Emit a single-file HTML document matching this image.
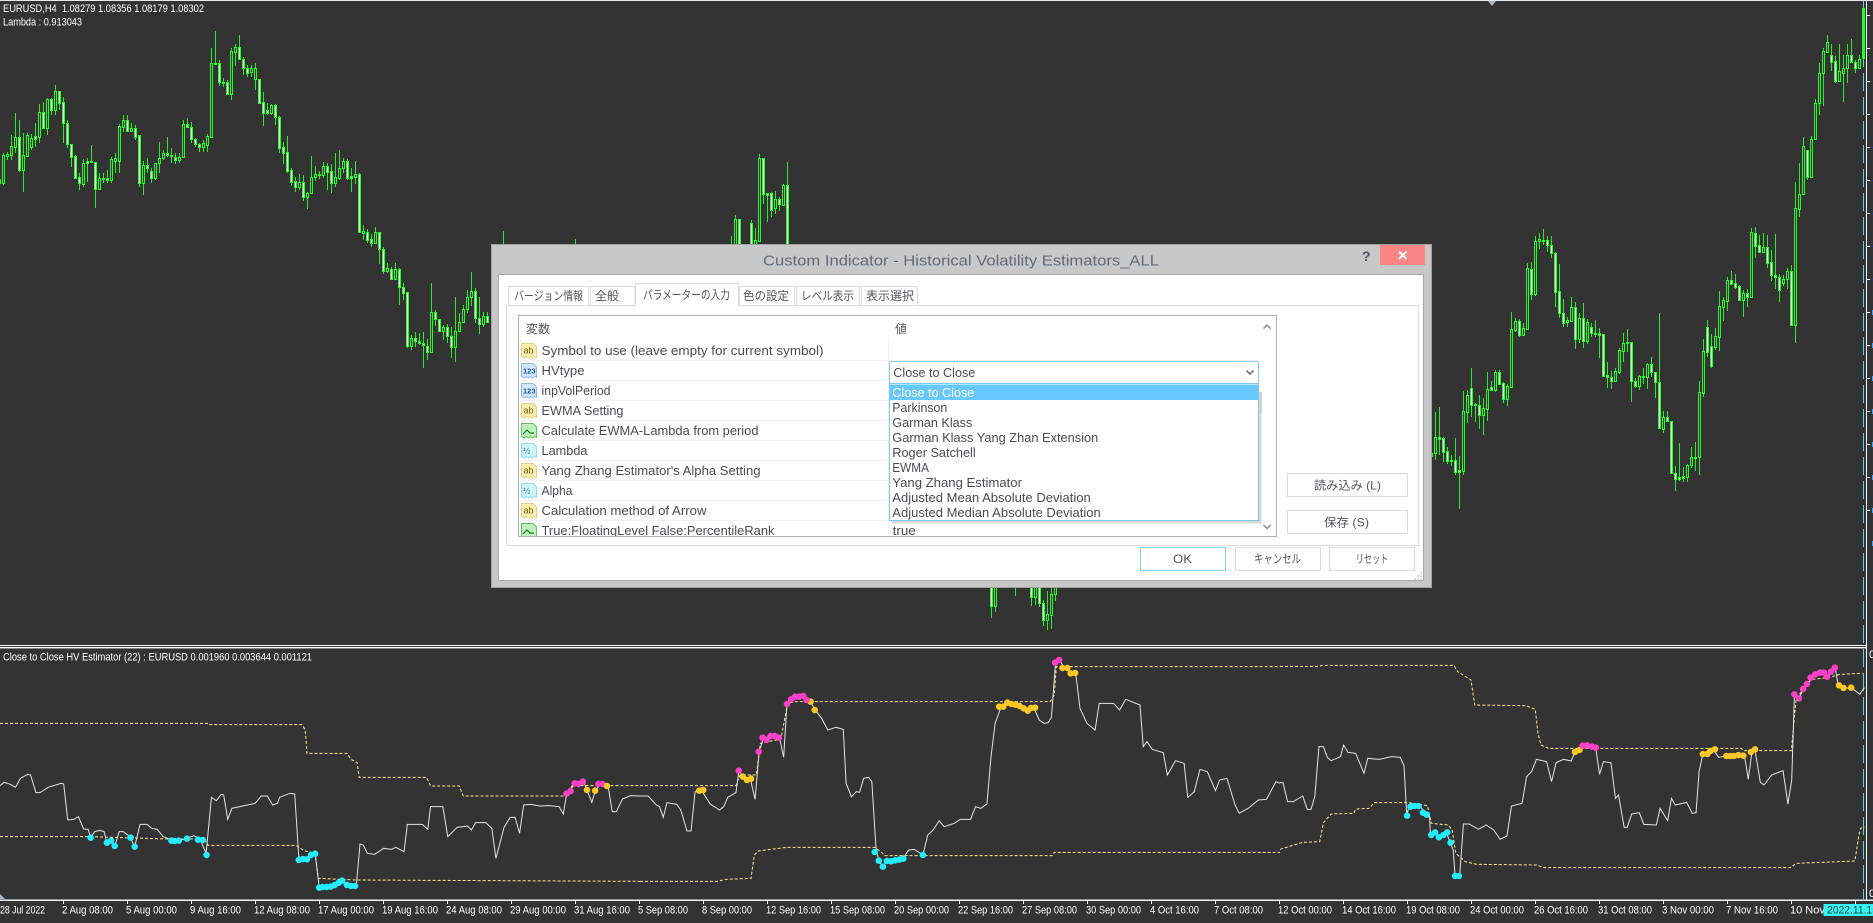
<!DOCTYPE html>
<html lang="ja"><head><meta charset="utf-8"><title>EURUSD,H4</title>
<style>
html,body{margin:0;padding:0;background:#333;width:1873px;height:923px;overflow:hidden}
svg{display:block;position:absolute;left:0;top:0}
text{font-family:"Liberation Sans","Noto Sans CJK JP",sans-serif;white-space:pre}
.m{font-size:11px;fill:#fff}
.d{font-size:13px;fill:#4b4b52}
.j{font-size:12px;fill:#55555a}
.ns{vector-effect:non-scaling-stroke}
</style></head><body>
<svg id="s" width="1873" height="923" viewBox="0 0 1873 923" xmlns="http://www.w3.org/2000/svg">
<rect width="1873" height="923" fill="#333"/>
<rect x="0" y="0" width="1873" height="1" fill="#e8e8e8"/>
<path d="M1488 1h8l-4 5z" fill="#a8b8c8"/>
<path d="M0 894l5 5H0z" fill="#a8b8c8"/>

<path d="M1863.5 1V19M1863.5 25V43M1863.5 49V67M1863.5 73V91M1863.5 97V115M1863.5 121V139M1863.5 145V163M1863.5 169V187M1863.5 193V211M1863.5 217V235M1863.5 241V259M1863.5 265V283M1863.5 289V307M1863.5 313V331M1863.5 337V355M1863.5 361V379M1863.5 385V403M1863.5 409V427M1863.5 433V451M1863.5 457V475M1863.5 481V499M1863.5 505V523M1863.5 529V547M1863.5 553V571M1863.5 577V595M1863.5 601V619M1863.5 625V643M1863.5 649V667M1863.5 673V691M1863.5 697V715M1863.5 721V739M1863.5 745V763M1863.5 769V787M1863.5 793V811M1863.5 817V835M1863.5 841V859M1863.5 865V883M1863.5 889V899" stroke="#4fdcea" stroke-width="1" fill="none"/>
<rect x="1866" y="0" width="1" height="900" fill="#fff"/>
<path d="M1867 15.5h3M1867 48.5h3M1867 81.5h3M1867 114.5h3M1867 147.5h3M1867 180.5h3M1867 213.5h3M1867 246.5h3M1867 279.5h3M1867 312.5h3M1867 345.5h3M1867 378.5h3M1867 411.5h3M1867 444.5h3M1867 477.5h3M1867 510.5h3" stroke="#fff" fill="none"/>
<path d="M1872 312.5h1M1872 345.5h1M1872 378.5h1M1872 411.5h1M1872 444.5h1M1872 477.5h1M1872 510.5h1M1872 543.5h1" stroke="#3fa0ff" stroke-width="5" fill="none"/>
<path d="M1872 246.5h1M1872 279.5h1M1872 213.5h1M1872 180.5h1M1872 147.5h1" stroke="#2a2a90" stroke-width="2" fill="none"/>

<g id="c" shape-rendering="crispEdges"></g>

<text class="m" x="3" y="12" textLength="201" lengthAdjust="spacingAndGlyphs">EURUSD,H4  1.08279 1.08356 1.08179 1.08302</text>
<text class="m" x="3" y="25.5" textLength="79" lengthAdjust="spacingAndGlyphs">Lambda : 0.913043</text>

<rect x="0" y="645" width="1866" height="1" fill="#fff"/>
<rect x="0" y="647" width="1866" height="1.4" fill="#fff"/>
<text class="m" x="3" y="660.5" textLength="309" lengthAdjust="spacingAndGlyphs">Close to Close HV Estimator (22) : EURUSD 0.001960 0.003644 0.001121</text>
<text class="m" x="1869" y="658">0</text>
<text class="m" x="1869" y="897">0</text>

<g fill="none">
<g transform="translate(0,640) scale(.40816,.33333)">
<polyline class="ns" stroke="#ffee88" stroke-width="1" stroke-dasharray="3 2" points="0,250 510,250 512,254 740,254 748,270 752,340 850,340 860,358 875,368 880,412 1045,412 1055,438 1125,438 1135,468 1385,468 1405,437 1568,437"/>
<polyline class="ns" stroke="#ffee88" stroke-width="1" stroke-dasharray="3 2" points="0,590 220,590 410,597 500,597 510,616 725,616 745,632 772,640 780,715 870,720 1568,724"/>
<polyline class="ns" stroke="#e4e4e4" stroke-width="1" points="0,437 10,427 25,433 38,442 50,415 68,403 75,405 88,458 98,458 118,442 150,430 156,432 166,540 180,538 192,530 205,567 216,568 222,592 232,575 245,571 255,575 262,610 270,600 282,615 292,575 302,575 318,590 330,620 343,553 360,553 372,565 385,568 400,590 415,597 440,600 455,597 475,587 490,597 505,640 518,472 530,482 542,463 548,465 558,538 568,505 625,490 640,468 655,468 668,495 680,490 685,472 710,460 722,462 732,650 745,657 760,645 772,640 782,740 800,740 835,722 850,735 873,735 882,612 890,615 900,640 918,643 940,625 960,628 970,622 990,635 998,553 1035,553 1048,568 1055,500 1085,500 1097,590 1120,562 1145,558 1155,570 1165,548 1190,548 1205,565 1215,655 1235,562 1250,532 1262,532 1273,580 1283,495 1300,493 1322,498 1345,497 1370,500 1380,522 1388,465 1405,430 1430,425 1438,450 1450,487 1458,455 1470,432 1490,440 1500,515 1510,515 1525,477 1545,467 1568,468"/>
<path class="ns" stroke="#22eeff" stroke-width="6.500" stroke-linecap="round" d="M222 593h.1M262 608h.1M272 602h.1M281 618h.1M320 593h.1M330 620h.1M420 602h.1M428 603h.1M438 602h.1M458 596h.1M485 599h.1M497 600h.1M506 645h.1M732 660h.1M742 657h.1M752 658h.1M762 645h.1M772 641h.1M782 743h.1M790 741h.1M800 741h.1M810 740h.1M820 735h.1M830 728h.1M838 722h.1M850 735h.1M860 738h.1M870 738h.1"/>
<path class="ns" stroke="#ff40c8" stroke-width="6.500" stroke-linecap="round" d="M1388 461h.1M1398 453h.1M1408 430h.1M1418 432h.1M1428 425h.1M1466 432h.1M1476 432h.1"/>
<path class="ns" stroke="#ffc822" stroke-width="6.500" stroke-linecap="round" d="M1438 450h.1M1458 452h.1M1487 438h.1"/>
</g>
<g transform="translate(640,640) scale(.40816,.33333)">
<polyline class="ns" stroke="#ffee88" stroke-width="1" stroke-dasharray="3 2" points="0,437 235,437 245,405 285,405 295,310 345,297 362,190 380,185 1005,185 1015,165 1020,80 1568,80"/>
<polyline class="ns" stroke="#ffee88" stroke-width="1" stroke-dasharray="3 2" points="0,724 190,724 210,718 272,715 280,645 290,633 360,622 575,622 590,635 600,647 1010,647 1015,637 1568,637"/>
<polyline class="ns" stroke="#e4e4e4" stroke-width="1" points="0,468 20,468 40,495 48,500 57,532 66,488 90,493 100,510 115,573 125,573 135,455 150,450 172,492 195,510 205,500 215,472 235,458 242,395 255,410 270,415 282,478 292,335 302,295 325,287 342,295 352,352 360,190 380,172 400,168 418,185 428,208 445,235 460,270 480,262 498,268 505,430 518,470 530,455 538,457 548,415 560,412 568,425 578,620 585,662 595,680 605,663 645,655 658,630 672,628 693,645 705,585 718,570 733,542 745,560 770,550 785,538 810,538 822,500 835,505 850,492 860,350 870,250 885,200 900,188 935,200 950,212 965,203 978,240 990,250 1000,248 1008,232 1018,70 1028,60 1040,85 1060,100 1068,105 1078,205 1095,250 1115,270 1125,190 1160,190 1175,210 1190,178 1225,195 1233,320 1242,305 1255,328 1282,338 1292,405 1312,362 1333,370 1342,472 1358,455 1372,388 1390,395 1410,452 1420,420 1438,415 1458,495 1468,520 1490,505 1515,480 1535,478 1558,425 1568,430"/>
<path class="ns" stroke="#ffc822" stroke-width="6.500" stroke-linecap="round" d="M145 452h.1M155 450h.1M252 410h.1M262 420h.1M272 416h.1M418 185h.1M428 210h.1M880 200h.1M890 200h.1M900 188h.1M910 192h.1M920 194h.1M930 198h.1M940 205h.1M950 212h.1M958 204h.1M968 203h.1M1035 84h.1M1047 84h.1M1055 100h.1M1066 99h.1"/>
<path class="ns" stroke="#ff40c8" stroke-width="6.500" stroke-linecap="round" d="M242 392h.1M291 335h.1M300 293h.1M310 300h.1M320 288h.1M330 288h.1M340 293h.1M360 192h.1M370 178h.1M380 170h.1M390 170h.1M400 168h.1M408 180h.1M1017 68h.1M1027 60h.1"/>
<path class="ns" stroke="#22eeff" stroke-width="6.500" stroke-linecap="round" d="M575 636h.1M585 662h.1M595 680h.1M605 663h.1M615 664h.1M625 661h.1M635 659h.1M645 656h.1M693 645h.1"/>
</g>
<g transform="translate(1280,640) scale(.37821,.33333)">
<polyline class="ns" stroke="#ffee88" stroke-width="1" stroke-dasharray="3 2" points="0,79 105,79 110,76 460,76 470,95 505,120 515,195 650,197 675,208 682,280 690,315 710,325 1220,325 1225,332 1352,332 1360,230 1365,175 1405,118 1450,113 1480,103 1540,100"/>
<polyline class="ns" stroke="#ffee88" stroke-width="1" stroke-dasharray="3 2" points="0,628 60,607 105,605 115,548 135,522 195,520 200,507 235,505 250,488 340,488 390,497 400,550 445,555 455,570 465,640 490,665 520,673 680,675 695,683 1350,683 1365,670 1520,663 1530,590 1535,565 1545,562"/>
<polyline class="ns" stroke="#e4e4e4" stroke-width="1" points="0,428 8,428 20,485 35,485 60,468 72,508 82,508 92,470 103,320 115,320 125,352 135,362 160,350 168,315 180,337 200,340 222,400 232,355 262,358 295,350 318,352 328,378 335,525 342,497 370,497 385,522 395,525 398,585 410,575 420,592 440,578 450,608 458,630 463,708 475,708 485,552 500,552 525,568 545,555 565,570 582,598 600,588 612,498 640,490 652,410 665,395 678,358 705,365 718,425 730,368 750,358 770,363 780,335 795,322 835,325 845,403 855,365 875,368 887,475 895,465 910,562 918,562 930,522 950,518 962,553 995,555 1005,505 1025,542 1035,475 1045,495 1075,487 1090,520 1100,518 1108,395 1118,342 1145,328 1160,352 1180,348 1228,345 1238,418 1248,335 1256,330 1270,427 1280,435 1300,405 1330,392 1343,492 1353,420 1360,170 1372,175 1385,145 1405,115 1430,98 1448,110 1468,83 1475,130 1490,145 1510,143 1533,163 1545,143"/>
<path class="ns" stroke="#22eeff" stroke-width="6.500" stroke-linecap="round" d="M336 527h.1M345 500h.1M355 498h.1M366 498h.1M378 518h.1M388 524h.1M400 585h.1M410 577h.1M420 592h.1M432 585h.1M442 577h.1M451 608h.1M463 708h.1M473 708h.1"/>
<path class="ns" stroke="#ffc822" stroke-width="6.500" stroke-linecap="round" d="M780 336h.1M792 330h.1M1118 342h.1M1130 342h.1M1138 333h.1M1150 328h.1M1180 348h.1M1190 348h.1M1200 348h.1M1212 345h.1M1225 347h.1M1245 336h.1M1256 328h.1M1478 136h.1M1490 144h.1M1510 143h.1"/>
<path class="ns" stroke="#ff40c8" stroke-width="6.500" stroke-linecap="round" d="M800 317h.1M812 316h.1M825 320h.1M835 323h.1M1360 163h.1M1372 175h.1M1383 147h.1M1393 132h.1M1403 113h.1M1415 103h.1M1428 98h.1M1438 98h.1M1446 110h.1M1457 95h.1M1467 83h.1"/>
</g>
</g>

<rect x="0" y="899.500" width="1873" height="1.400" fill="#fff"/>
<path d="M63.5 900v4M127.5 900v4M191.5 900v4M255.5 900v4M319.5 900v4M383.5 900v4M447.5 900v4M511.5 900v4M575.5 900v4M639.5 900v4M703.5 900v4M767.5 900v4M831.5 900v4M895.5 900v4M959.5 900v4M1023.5 900v4M1087.5 900v4M1151.5 900v4M1215.5 900v4M1279.5 900v4M1343.5 900v4M1407.5 900v4M1471.5 900v4M1535.5 900v4M1599.5 900v4M1663.5 900v4M1727.5 900v4M1791.5 900v4M1855.5 900v4" stroke="#fff" fill="none"/>
<g class="ax">
<text class="m" x="0" y="913.500" textLength="45" lengthAdjust="spacingAndGlyphs">28 Jul 2022</text>
<text class="m" x="62" y="913.500" textLength="51" lengthAdjust="spacingAndGlyphs">2 Aug 08:00</text>
<text class="m" x="126" y="913.500" textLength="51" lengthAdjust="spacingAndGlyphs">5 Aug 00:00</text>
<text class="m" x="190" y="913.500" textLength="51" lengthAdjust="spacingAndGlyphs">9 Aug 16:00</text>
<text class="m" x="254" y="913.500" textLength="56" lengthAdjust="spacingAndGlyphs">12 Aug 08:00</text>
<text class="m" x="318" y="913.500" textLength="56" lengthAdjust="spacingAndGlyphs">17 Aug 00:00</text>
<text class="m" x="382" y="913.500" textLength="56" lengthAdjust="spacingAndGlyphs">19 Aug 16:00</text>
<text class="m" x="446" y="913.500" textLength="56" lengthAdjust="spacingAndGlyphs">24 Aug 08:00</text>
<text class="m" x="510" y="913.500" textLength="56" lengthAdjust="spacingAndGlyphs">29 Aug 00:00</text>
<text class="m" x="574" y="913.500" textLength="56" lengthAdjust="spacingAndGlyphs">31 Aug 16:00</text>
<text class="m" x="638" y="913.500" textLength="50" lengthAdjust="spacingAndGlyphs">5 Sep 08:00</text>
<text class="m" x="702" y="913.500" textLength="50" lengthAdjust="spacingAndGlyphs">8 Sep 00:00</text>
<text class="m" x="766" y="913.500" textLength="55" lengthAdjust="spacingAndGlyphs">12 Sep 16:00</text>
<text class="m" x="830" y="913.500" textLength="55" lengthAdjust="spacingAndGlyphs">15 Sep 08:00</text>
<text class="m" x="894" y="913.500" textLength="55" lengthAdjust="spacingAndGlyphs">20 Sep 00:00</text>
<text class="m" x="958" y="913.500" textLength="55" lengthAdjust="spacingAndGlyphs">22 Sep 16:00</text>
<text class="m" x="1022" y="913.500" textLength="55" lengthAdjust="spacingAndGlyphs">27 Sep 08:00</text>
<text class="m" x="1086" y="913.500" textLength="55" lengthAdjust="spacingAndGlyphs">30 Sep 00:00</text>
<text class="m" x="1150" y="913.500" textLength="49" lengthAdjust="spacingAndGlyphs">4 Oct 16:00</text>
<text class="m" x="1214" y="913.500" textLength="49" lengthAdjust="spacingAndGlyphs">7 Oct 08:00</text>
<text class="m" x="1278" y="913.500" textLength="54" lengthAdjust="spacingAndGlyphs">12 Oct 00:00</text>
<text class="m" x="1342" y="913.500" textLength="54" lengthAdjust="spacingAndGlyphs">14 Oct 16:00</text>
<text class="m" x="1406" y="913.500" textLength="54" lengthAdjust="spacingAndGlyphs">19 Oct 08:00</text>
<text class="m" x="1470" y="913.500" textLength="54" lengthAdjust="spacingAndGlyphs">24 Oct 00:00</text>
<text class="m" x="1534" y="913.500" textLength="54" lengthAdjust="spacingAndGlyphs">26 Oct 16:00</text>
<text class="m" x="1598" y="913.500" textLength="54" lengthAdjust="spacingAndGlyphs">31 Oct 08:00</text>
<text class="m" x="1662" y="913.500" textLength="52" lengthAdjust="spacingAndGlyphs">3 Nov 00:00</text>
<text class="m" x="1726" y="913.500" textLength="52" lengthAdjust="spacingAndGlyphs">7 Nov 16:00</text>
<text class="m" x="1790" y="913.500">10 Nov</text>
</g>
<rect x="1823.5" y="904" width="50" height="12" fill="#33f5f5"/>
<text x="1827" y="913.500" style="font-size:11px;fill:#1c3c40" textLength="51" lengthAdjust="spacingAndGlyphs">2022.11.15</text>

<!-- dialog -->
<rect x="491.5" y="244.5" width="940" height="343" fill="#c8c8c8" stroke="#a2a2a2"/>
<rect x="498.5" y="274.5" width="925" height="306" fill="#fff" stroke="#a8a8a8"/>
<text x="763" y="265.5" style="font-size:15px;fill:#5f6b78" textLength="396" lengthAdjust="spacingAndGlyphs">Custom Indicator - Historical Volatility Estimators_ALL</text>
<text x="1362" y="261" style="font-size:14px;font-weight:bold;fill:#4a5460">?</text>
<rect x="1380" y="245" width="45" height="20" fill="#fb8585"/>
<path d="M1399 251.5l7.5 7.5M1406.500 251.500l-7.500 7.500" stroke="#fff" stroke-width="2" fill="none"/>

<rect x="506.500" y="305.500" width="912" height="240" fill="#fff" stroke="#dcdcdc"/>
<g fill="#fff" stroke="#dcdcdc">
<path d="M508.500 305V286.500H588.500V305"/>
<path d="M590.500 305V286.500H635V305"/>
<path d="M739.500 305V286.500H794.500V305"/>
<path d="M796.500 305V286.500H859.500V305"/>
<path d="M861.500 305V286.500H917.500V305"/>
<path d="M635.500 306V283.500H738.500V306" />
</g>
<rect x="636" y="303" width="102" height="4" fill="#fff"/>
<text class="j" x="514" y="300" textLength="69" lengthAdjust="spacingAndGlyphs">バージョン情報</text>
<text class="j" x="595" y="300" textLength="24" lengthAdjust="spacingAndGlyphs">全般</text>
<text class="j" x="643" y="299" textLength="87" lengthAdjust="spacingAndGlyphs">パラメーターの入力</text>
<text class="j" x="743" y="300" textLength="46" lengthAdjust="spacingAndGlyphs">色の設定</text>
<text class="j" x="801" y="300" textLength="53" lengthAdjust="spacingAndGlyphs">レベル表示</text>
<text class="j" x="866" y="300" textLength="48" lengthAdjust="spacingAndGlyphs">表示選択</text>

<clipPath id="lb"><rect x="519" y="316" width="758" height="220"/></clipPath>
<rect x="518.500" y="315.500" width="758" height="221" fill="#fff" stroke="#aab0ba"/>
<text class="j" x="526" y="333" textLength="24" lengthAdjust="spacingAndGlyphs">変数</text>
<text class="j" x="895" y="333" textLength="12" lengthAdjust="spacingAndGlyphs">値</text>
<path d="M1263.500 328.500l3.500-3.500 3.500 3.500M1263.500 525l3.500 3.500 3.500-3.500" stroke="#8c8c8c" stroke-width="1.500" fill="none"/>

<g clip-path="url(#lb)">
<path d="M522 360.500H1257M522 380.500H888M522 400.500H1257M522 420.500H1257M522 440.500H1257M522 460.500H1257M522 480.500H1257M522 500.500H1257M522 520.500H1257M888.500 341V536" stroke="#f1f1f1" fill="none"/>

<g transform="translate(521,343)"><path d="M.5 .5H12L15.500 4V14.500L13.500 13.500L11.500 15 9.500 13.500 7.500 15 5.500 13.500 3.500 15 .5 13.500Z" fill="#fbeea8" stroke="#e4d080"/><text x="2.500" y="10.500" style="font-size:9px;fill:#6a5a20">ab</text></g>
<g transform="translate(521,363)"><path d="M.5 .5H12L15.500 4V14.500L13.500 13.500L11.500 15 9.500 13.500 7.500 15 5.500 13.500 3.500 15 .5 13.500Z" fill="#cfe6fb" stroke="#8cbce6"/><text x="2" y="10.500" style="font-size:7.500px;font-weight:bold;fill:#1f5a90">123</text></g>
<g transform="translate(521,383)"><path d="M.5 .5H12L15.500 4V14.500L13.500 13.500L11.500 15 9.500 13.500 7.500 15 5.500 13.500 3.500 15 .5 13.500Z" fill="#cfe6fb" stroke="#8cbce6"/><text x="2" y="10.500" style="font-size:7.500px;font-weight:bold;fill:#1f5a90">123</text></g>
<g transform="translate(521,403)"><path d="M.5 .5H12L15.500 4V14.500L13.500 13.500L11.500 15 9.500 13.500 7.500 15 5.500 13.500 3.500 15 .5 13.500Z" fill="#fbeea8" stroke="#e4d080"/><text x="2.500" y="10.500" style="font-size:9px;fill:#6a5a20">ab</text></g>
<g transform="translate(521,423)"><path d="M.5 .5H12L15.500 4V14.500L13.500 13.500L11.500 15 9.500 13.500 7.500 15 5.500 13.500 3.500 15 .5 13.500Z" fill="#bff0bf" stroke="#5cc45c"/><path d="M2 11l4-4 3 3h4" fill="none" stroke="#187a18" stroke-width="1.200"/></g>
<g transform="translate(521,443)"><path d="M.5 .5H12L15.500 4V14.500L13.500 13.500L11.500 15 9.500 13.500 7.500 15 5.500 13.500 3.500 15 .5 13.500Z" fill="#cdf5fa" stroke="#8fdeea"/><text x="2.500" y="10.500" style="font-size:8px;fill:#2a7a8a">½</text></g>
<g transform="translate(521,463)"><path d="M.5 .5H12L15.500 4V14.500L13.500 13.500L11.500 15 9.500 13.500 7.500 15 5.500 13.500 3.500 15 .5 13.500Z" fill="#fbeea8" stroke="#e4d080"/><text x="2.500" y="10.500" style="font-size:9px;fill:#6a5a20">ab</text></g>
<g transform="translate(521,483)"><path d="M.5 .5H12L15.500 4V14.500L13.500 13.500L11.500 15 9.500 13.500 7.500 15 5.500 13.500 3.500 15 .5 13.500Z" fill="#cdf5fa" stroke="#8fdeea"/><text x="2.500" y="10.500" style="font-size:8px;fill:#2a7a8a">½</text></g>
<g transform="translate(521,503)"><path d="M.5 .5H12L15.500 4V14.500L13.500 13.500L11.500 15 9.500 13.500 7.500 15 5.500 13.500 3.500 15 .5 13.500Z" fill="#fbeea8" stroke="#e4d080"/><text x="2.500" y="10.500" style="font-size:9px;fill:#6a5a20">ab</text></g>
<g transform="translate(521,523)"><path d="M.5 .5H12L15.500 4V14.500L13.500 13.500L11.500 15 9.500 13.500 7.500 15 5.500 13.500 3.500 15 .5 13.500Z" fill="#bff0bf" stroke="#5cc45c"/><path d="M2 11l4-4 3 3h4" fill="none" stroke="#187a18" stroke-width="1.200"/></g>

<text class="d" x="541.500" y="355" textLength="282" lengthAdjust="spacingAndGlyphs">Symbol to use (leave empty for current symbol)</text>
<text class="d" x="541.500" y="375" textLength="43" lengthAdjust="spacingAndGlyphs">HVtype</text>
<text class="d" x="541.500" y="395" textLength="69" lengthAdjust="spacingAndGlyphs">inpVolPeriod</text>
<text class="d" x="541.500" y="415" textLength="82" lengthAdjust="spacingAndGlyphs">EWMA Setting</text>
<text class="d" x="541.500" y="435" textLength="217" lengthAdjust="spacingAndGlyphs">Calculate EWMA-Lambda from period</text>
<text class="d" x="541.500" y="455" textLength="46" lengthAdjust="spacingAndGlyphs">Lambda</text>
<text class="d" x="541.500" y="475" textLength="219" lengthAdjust="spacingAndGlyphs">Yang Zhang Estimator's Alpha Setting</text>
<text class="d" x="541.500" y="495" textLength="31" lengthAdjust="spacingAndGlyphs">Alpha</text>
<text class="d" x="541.500" y="515" textLength="165" lengthAdjust="spacingAndGlyphs">Calculation method of Arrow</text>
<text class="d" x="541.500" y="535" textLength="233" lengthAdjust="spacingAndGlyphs">True:FloatingLevel False:PercentileRank</text>
<text class="d" x="892.700" y="535" textLength="23" lengthAdjust="spacingAndGlyphs">true</text>
</g>

<!-- dropdown -->
<rect x="1259" y="392" width="3" height="21" fill="#d2d2d2"/>
<rect x="1259" y="413" width="2.500" height="110" fill="#c9c9c9" opacity=".7"/>
<rect x="892" y="521" width="369" height="2.500" fill="#c9c9c9" opacity=".7"/>
<rect x="889.500" y="361.500" width="369" height="22" fill="#fff" stroke="#84cdf8"/>
<text class="d" x="893.300" y="377" textLength="82" lengthAdjust="spacingAndGlyphs">Close to Close</text>
<path d="M1246.500 370.500l3.500 3.500 3.500-3.500" stroke="#7c7c7c" stroke-width="1.800" fill="none"/>
<rect x="889.500" y="383.500" width="369" height="137" fill="#fff" stroke="#7ec8f5"/>
<rect x="890" y="384.500" width="368" height="15.500" fill="#66c8ff"/>
<text class="d" x="892.300" y="397" style="fill:#fff" textLength="82" lengthAdjust="spacingAndGlyphs">Close to Close</text>
<text class="d" x="892.300" y="412" textLength="55" lengthAdjust="spacingAndGlyphs">Parkinson</text>
<text class="d" x="892.300" y="427" textLength="80" lengthAdjust="spacingAndGlyphs">Garman Klass</text>
<text class="d" x="892.300" y="442" textLength="206" lengthAdjust="spacingAndGlyphs">Garman Klass Yang Zhan Extension</text>
<text class="d" x="892.300" y="457" textLength="83.400" lengthAdjust="spacingAndGlyphs">Roger Satchell</text>
<text class="d" x="892.300" y="472" textLength="36.700" lengthAdjust="spacingAndGlyphs">EWMA</text>
<text class="d" x="892.300" y="487" textLength="129.700" lengthAdjust="spacingAndGlyphs">Yang Zhang Estimator</text>
<text class="d" x="892.300" y="502" textLength="198.400" lengthAdjust="spacingAndGlyphs">Adjusted Mean Absolute Deviation</text>
<text class="d" x="892.300" y="517" textLength="208.400" lengthAdjust="spacingAndGlyphs">Adjusted Median Absolute Deviation</text>

<!-- buttons -->
<g fill="#fff" stroke="#dcdcdc">
<rect x="1287.500" y="473.500" width="120" height="23"/>
<rect x="1287.500" y="510.500" width="120" height="23"/>
<rect x="1235.500" y="547.500" width="85" height="23"/>
<rect x="1329.500" y="547.500" width="85" height="23"/>
</g>
<rect x="1140.500" y="547.500" width="85" height="23" fill="#fff" stroke="#7fd0fa"/>
<text class="j" x="1314" y="489.500" textLength="67" lengthAdjust="spacingAndGlyphs">読み込み (L)</text>
<text class="j" x="1324" y="526.500" textLength="45" lengthAdjust="spacingAndGlyphs">保存 (S)</text>
<text class="j" x="1173" y="563" textLength="19" lengthAdjust="spacingAndGlyphs">OK</text>
<text class="j" x="1254" y="563" textLength="47" lengthAdjust="spacingAndGlyphs">キャンセル</text>
<text class="j" x="1355.700" y="563" textLength="32.600" lengthAdjust="spacingAndGlyphs">リセット</text>
<path d="M1420 572h2v2h-2zM1417 575h2v2h-2zM1420 575h2v2h-2zM1414 578h2v2h-2zM1417 578h2v2h-2zM1420 578h2v2h-2z" fill="#dcdcdc"/>
</svg>
<script>
(function(){
var S=[
[-1,0,[525,555,537,550,0]],
[0,0,[460,555,465,550,0, 455,480,462,467,0, 405,480,438,465,0, 340,460,412,440,0, 360,515,412,510,1, 400,575,465,510,0, 400,470,405,467,0, 403,450,414,440,0, 370,440,408,416,1, 312,430,337,410,0, 305,385,337,383,1, 295,405,297,383,0, 295,345,297,330,1, 255,345,273,330,0, 272,330,273,308,1, 292,430,307,370,1, 360,445,370,433,1, 433,500,433,470,1, 465,535,468,533,1, 520,570,532,550,1, 478,560,490,552,0, 475,545,484,490,1, 435,490,484,487,1, 485,625,487,566,1, 520,570,535,566,0, 520,550,534,537,1, 510,550,535,540,1, 470,550,477,540,0, 460,520,475,484,0, 372,518,378,484,0, 345,395,361,380,0, 345,392,361,392,1, 370,395,385,392,0, 375,420,385,410,1, 405,560,405,550,1, 482,585,496,550,0, 475,520,496,505,1, 505,550,514,533,1, 490,540,490,533,0, 425,520,475,490,0, 450,480,459,475,0, 410,470,460,465,1, 445,490,465,468,1, 460,492,472,480,1, 460,490,472,480,0, 360,472,373,472,0, 355,380,373,380,1, 365,430,380,418,1, 415,440,418,433,1, 428,455,432,442,1, 420,455,430,442,0, 403,455,408,434,0, 145,415,190,412,0, 93,190,188,190,1, 180,258,190,245,1, 235,260,245,248,1, 240,285,247,282,1, 145,300,153,282,0, 133,197,142,155,0, 105,180,142,178,1, 170,225,178,203,1, 195,232,203,218,1, 195,230,204,215,0, 190,270,205,238,0, 237,312,238,308,1, 277,378,307,338,1, 310,345,331,338,1, 312,345,315,340,0, 312,375,315,352,1, 347,458,352,443,1]],
[70,20,[366,432,382,398,1, 348,460,397,452,1, 445,497,451,485,1, 472,515,484,500,1, 462,510,487,500,0, 465,542,487,530,1, 515,567,520,530,0, 408,522,472,520,0, 438,483,462,472,0, 453,478,462,464,1, 427,473,438,464,0, 428,510,438,455,1, 432,518,454,488,1, 400,500,472,488,0, 390,480,444,473,0, 415,460,424,445,0, 418,480,424,473,1, 445,515,468,473,1, 423,492,462,470,0, 458,636,463,635,1, 615,660,634,640,0, 628,670,637,660,1, 642,680,658,668,1, 622,670,637,668,0, 636,732,637,688,1, 682,762,688,752,1, 730,760,745,752,0, 742,778,748,776,1, 730,780,748,776,0, 745,855,748,800,1, 790,840,800,818,1, 815,985,817,977,1, 945,990,955,977,0, 937,980,955,962,1, 938,975,962,970,1, 937,1043,970,975,1, 958,1020,977,995,1, 790,1000,875,995,0, 870,918,875,898,1, 897,935,898,932,1, 915,960,922,932,0, 912,968,922,947,1, 920,1014,947,982,1, 832,1025,932,982,0, 880,935,905,932,0, 855,910,868,905,0, 810,880,832,868,0, 757,858,814,832,0, 805,908,814,895,1, 830,942,895,912,1, 875,920,887,912,0, 875,910,887,905,1]],
[125,130,[303,360,-1,-1,0]],[143,130,[327,360,-1,-1,0]],[182,130,[318,360,-1,-1,0]],
[183,130,[255,360,268,360,0, 268,360,268,360,1]],
[187,130,[270,360,280,360,1, 294,360,330,360,0, 72,335,85,332,0, 85,222,85,193,1, 190,275,190,194,1, 187,260,190,240,1, 183,252,208,235,0, 202,242,208,222,1, 162,228,166,224,0, 96,360,166,360,1]],
[247,575,[0,130,0,92,1, 0,110,0,92,0]],[253,575,[0,62,-1,-1,0]],
[257,575,[0,92,0,65,1, 0,90,0,65,0, 0,95,0,85,1, 75,152,85,134,1, 48,164,118,134,0, 38,162,58,119,0, 0,78,0,58,0]],
[357,220,[690,715,700,708,1]],
[358,220,[575,720,652,698,0, 560,705,652,656,1, 650,725,655,695,1, 680,732,693,722,1, 705,738,720,723,1, 655,765,720,755,1, 708,866,750,755,1, 513,765,573,752,0, 510,608,525,575,0, 445,590,505,554,1, 550,605,552,556,1, 525,627,555,585,1, 535,645,565,585,0, 457,603,508,566,0, 483,512,502,510,1, 450,516,457,510,0, 450,495,457,491,1, 487,550,490,537,1, 493,558,498,537,0, 277,503,328,500,0, 295,335,304,330,0, 298,350,304,344,1, 310,348,325,345,0, 130,330,145,326,0, 127,240,148,221,1, 48,228,64,221,0, 38,87,58,64,0, 27,75,61,63,1, 48,95,61,76,1, 48,115,76,100,1, 95,262,100,215,1, 133,293,214,278,1, 238,320,278,308,1, 292,320,300,307,0, 232,305,262,303,0, 247,386,262,356,1, 280,368,295,356,0, 250,383,295,362,1, 298,372,306,362,0, 310,352,322,340,1, 300,352,339,341,1, 325,413,340,344,1, 343,470,343,467,1, 427,503,465,472,1, 453,507,472,482,1, 445,485,454,482,0, 385,462,390,455,0, 340,425,370,392,0, 327,395,366,370,1, 365,545,366,484,1, 475,505,484,499,1, 465,510,467,499,0, 445,492,468,472,1, 430,507,432,470,0, 412,470,433,457,1, 455,533,457,487,1, 280,628,487,625,1, 573,638,592,628,0, 573,607,592,602,1, 603,762,604,760,1, 738,812,760,778,1, 670,782,772,776,1, 740,785,769,773,1, 732,785,736,770,0, 680,745,712,736,0, 667,752,711,713,1, 483,765,516,712,0, 357,530,393,518,0, 300,412,322,395,1, 342,443,378,438,1, 325,390,348,380,0, 213,392,258,350,0, 232,302,240,260,0, 170,272,180,242,0, 153,192,180,192,1, 162,207,190,200,1, 195,240,198,239,1, 210,290,220,239,0, 207,260,220,230,1, 25,232,37,230,0, 22,113,40,77,1, 45,100,75,95,1, 40,95,82,95,0, 45,143,82,128,1, 90,182,127,166,1, 42,207,165,170,1, 162,245,170,209,1, 165,197,178,188,0, 145,207,153,178,0, 135,317,153,315,1]],
[448,0,[545,1028,625,975,0, 490,652,583,627,0, 412,585,438,583,0, 450,540,450,530,1, 408,532,418,532,0, 298,420,310,418,0, 190,345,218,310,0, 145,318,152,218,0, 105,160,127,155,0, 133,212,166,185,1, 168,248,184,242,1, 133,242,214,242,0, 165,305,205,218,0, 133,248,166,205,0, 117,188,166,187,1, 180,218,187,204,1, 165,205,176,203,0, 20,180,25,175,2]]
];
var w='',b='';
S.forEach(function(s){
 var i=s[0],o=s[1],a=s[2];
 for(var k=0;k<a.length;k+=5,i++){
  var x=4*i+3.5,wt=Math.round(o+a[k]/3),wb=Math.round(o+a[k+1]/3);
  w+='M'+x+' '+wt+'V'+wb;
  if(a[k+2]>=0){
   var t=Math.round(o+a[k+2]/3),e=Math.round(o+a[k+3]/3);
   if(e-t<1)e=t+1;
   var f=a[k+4]==1?'#fff':(a[k+4]==2?'#22ff22':'#333');
   b+='<rect x="'+(x-1)+'" y="'+(t+.5)+'" width="2" height="'+(e-t)+'" fill="'+f+'" stroke="#22ff22"/>';
  }
 }
});
document.getElementById('c').innerHTML='<path d="'+w+'" stroke="#2ee82e" fill="none"/>'+b;
})();
</script>
</body></html>
